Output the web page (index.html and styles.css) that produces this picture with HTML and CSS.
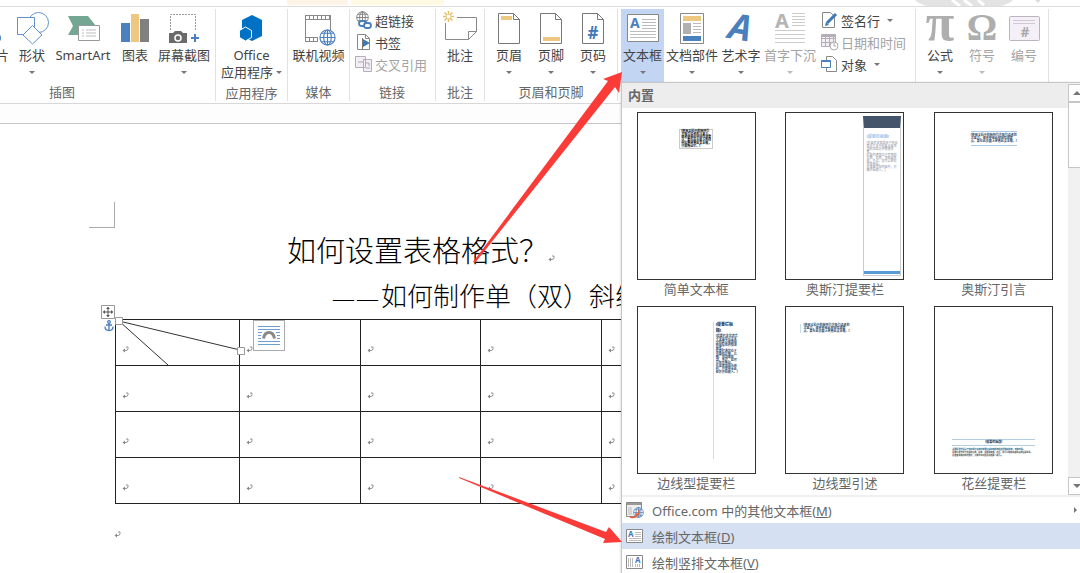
FILE: index.html
```html
<!DOCTYPE html>
<html lang="zh-CN">
<head>
    <meta charset="UTF-8">
    <meta name="viewport" content="width=device-width, initial-scale=1.0">
    <title>如何设置表格格式</title>
    <link rel="stylesheet" href="styles.css">
</head>
<body>
    <!-- shared symbols -->
    <svg class="symbols" aria-hidden="true">
        <symbol id="mark" viewBox="0 0 7 7">
            <path d="M4 1h2v1.500q0 2-2 2H1" fill="none" stroke="#888" stroke-width="0.900"/>
            <path d="M3 2.500v4L.5 4.500z" fill="#888"/>
        </symbol>
        <symbol id="globe" viewBox="0 0 18 18">
            <circle cx="9" cy="9" r="8" fill="#fff"/>
            <g fill="none" stroke="currentColor" stroke-width="1.200">
                <circle cx="9" cy="9" r="8"/>
                <ellipse cx="9" cy="9" rx="4" ry="8"/>
                <path d="M9 1v16M1 9h16M2.500 4.500h13M2.500 13.500h13"/>
            </g>
        </symbol>
        <symbol id="page" viewBox="0 0 36 34">
            <path d="M7.500 3.500h15l6 6v24h-21zM22.500 3.500v6h6" fill="#fff" stroke="#777"/>
        </symbol>
    </svg>

    <div class="app">
        <header class="tabs">
            <div class="tab-group tab-design"></div>
            <div class="tab-group tab-table"></div>
            <svg class="cloud" width="130" height="6" viewBox="0 0 130 6">
                <path d="M5 0h98q-4 4-12 6H17Q9 4 5 0z" fill="#e3e3e3"/>
                <path d="M42 0l8 6M54 0l8 6M68 0l6 5" stroke="#fff" stroke-width="3"/>
                <path d="M125 0h6l-3 3z" fill="#ddd"/>
            </svg>
        </header>

        <nav class="ribbon">
            <section class="group group-illustrations">
                <div class="tools">
                    <button class="tool w36">
                        <svg width="36" height="34" viewBox="0 0 36 34"><circle cx="17" cy="28" r="6" fill="#4a80bd"/></svg>
                        <span>图片</span>
                    </button>
                    <button class="tool w36">
                        <svg width="36" height="34" viewBox="0 0 36 34" fill="#fff" stroke="#5f93cf">
                            <circle cx="24.500" cy="12.500" r="10"/>
                            <path d="M3.500 7.500h17v17h-17z"/>
                            <path d="M18.500 15.500l9.500 9.500-9.500 9-9.500-9z"/>
                        </svg>
                        <span>形状</span>
                        <i class="caret"></i>
                    </button>
                    <button class="tool w66">
                        <svg width="36" height="34" viewBox="0 0 36 34">
                            <path d="M3 6h20l8 10-7 9H3l5-9z" fill="#73a793"/>
                            <path d="M13.500 15.500h21v15h-21z" fill="#fff" stroke="#999"/>
                            <path d="M17 20h2M21 20h10M17 23h2M21 23h10M17 26h2M21 26h10" stroke="#bbb"/>
                        </svg>
                        <span>SmartArt</span>
                    </button>
                    <button class="tool w38">
                        <svg width="36" height="34" viewBox="0 0 36 34">
                            <path d="M4 13h9v19H4z" fill="#4a80bd"/>
                            <path d="M14 4h8v28h-8z" fill="#eec880"/>
                            <path d="M23 9h9v23h-9z" fill="#808080"/>
                        </svg>
                        <span>图表</span>
                    </button>
                    <button class="tool w60">
                        <svg width="36" height="34" viewBox="0 0 36 34">
                            <path d="M4.500 20V4.500h25V20" fill="none" stroke="#999" stroke-dasharray="2 1"/>
                            <path d="M3 23h4l2-2h6l2 2h4v10H3z" fill="#6b6b6b"/>
                            <circle cx="12" cy="28" r="3" fill="#6b6b6b" stroke="#fff" stroke-width="1.500"/>
                            <path d="M29 24v8M25 28h8" stroke="#4a80bd" stroke-width="2"/>
                        </svg>
                        <span>屏幕截图</span>
                        <i class="caret"></i>
                    </button>
                </div>
                <h2>插图</h2>
            </section>

            <section class="group group-apps">
                <div class="tools">
                    <button class="tool">
                        <svg width="36" height="34" viewBox="0 0 36 34">
                            <path d="M19 5l10 5v16l-10 5-10-5V10z" fill="#0072c6"/>
                            <path d="M12.500 17l6 3.500v7l-6 3.500-6-3.500v-7z" fill="#0072c6" stroke="#fff"/>
                        </svg>
                        <span>Office</span>
                        <span class="with-caret">应用程序<i class="caret"></i></span>
                    </button>
                </div>
                <h2>应用程序</h2>
            </section>

            <section class="group group-media">
                <div class="tools">
                    <button class="tool">
                        <svg class="blue" width="36" height="34" viewBox="0 0 36 34">
                            <path d="M5.500 5v26M30.500 5v16M5 5.500h26M5 9.500h26M5 27.500h13M5 31.500h13" fill="none" stroke="#888"/>
                            <path d="M5 7.500h26M5 29.500h13" stroke="#888" stroke-width="4" stroke-dasharray="1 3"/>
                            <use href="#globe" x="19" y="19" width="17" height="17"/>
                        </svg>
                        <span>联机视频</span>
                    </button>
                </div>
                <h2>媒体</h2>
            </section>

            <section class="group group-links">
                <div class="rows">
                    <button class="row">
                        <svg width="18" height="18" viewBox="0 0 18 18">
                            <g color="#777"><use href="#globe" x="1" y="0" width="13" height="13"/></g>
                            <g fill="#fff" stroke="#4a80bd" stroke-width="1.800"><rect x="4" y="10" width="7" height="5" rx="2.500"/><rect x="9" y="12" width="7" height="5" rx="2.500"/></g>
                        </svg>
                        <span>超链接</span>
                    </button>
                    <button class="row">
                        <svg width="18" height="18" viewBox="0 0 18 18">
                            <path d="M2.500 1.500h8l4 4v11h-12zM10.500 1.500v4h4" fill="#fff" stroke="#888"/>
                            <path d="M7.500 5v11" stroke="#777"/>
                            <path d="M8 6l7 4-7 4z" fill="#3f78b8"/>
                        </svg>
                        <span>书签</span>
                    </button>
                    <button class="row" disabled>
                        <svg width="18" height="18" viewBox="0 0 18 18">
                            <path d="M.5 1.500h10v11H.5zM8.500 4.500h8v12h-8z" fill="#f4eef6" stroke="#b5aeb8"/>
                            <path d="M3 7h5M11 8h3v3M11 13h4" fill="none" stroke="#aaa"/>
                        </svg>
                        <span>交叉引用</span>
                    </button>
                </div>
                <h2>链接</h2>
            </section>

            <section class="group group-comments">
                <div class="tools">
                    <button class="tool">
                        <svg width="36" height="34" viewBox="0 0 36 34">
                            <path d="M15 7.500h19.500v14l-8 8h-23V13M26.500 29.500v-8h8" fill="none" stroke="#888"/>
                            <path d="M6.500 1v11M1 6.500h11M2.500 2.500l8 8M10.500 2.500l-8 8" stroke="#e9bd67" stroke-width="1.500"/>
                            <circle cx="6.500" cy="6.500" r="2" fill="#fff"/>
                        </svg>
                        <span>批注</span>
                    </button>
                </div>
                <h2>批注</h2>
            </section>

            <section class="group group-header">
                <div class="tools">
                    <button class="tool w42">
                        <svg width="36" height="34" viewBox="0 0 36 34"><use href="#page"/><path d="M10 6h11v4H10z" fill="#eec880"/></svg>
                        <span>页眉</span>
                        <i class="caret"></i>
                    </button>
                    <button class="tool w42">
                        <svg width="36" height="34" viewBox="0 0 36 34"><use href="#page"/><path d="M10 27h17v4H10z" fill="#eec880"/></svg>
                        <span>页脚</span>
                        <i class="caret"></i>
                    </button>
                    <button class="tool w42">
                        <svg width="36" height="34" viewBox="0 0 36 34"><use href="#page"/><text class="hash" x="18" y="29">#</text></svg>
                        <span>页码</span>
                        <i class="caret"></i>
                    </button>
                </div>
                <h2>页眉和页脚</h2>
            </section>

            <section class="group group-text">
                <div class="tools">
                    <button class="tool w43 active" aria-expanded="true">
                        <svg width="36" height="34" viewBox="0 0 36 34">
                            <path d="M2.500 4.500h31v27h-31z" fill="#fff" stroke="#888"/>
                            <text class="letter-a" x="5" y="18">A</text>
                            <path d="M17 9.500h14M17 12.500h14M17 15.500h14M17 18.500h14M5 21.500h26M5 24.500h26M5 27.500h26" stroke="#bbb"/>
                        </svg>
                        <span>文本框</span>
                        <i class="caret"></i>
                    </button>
                    <button class="tool w56">
                        <svg width="36" height="34" viewBox="0 0 36 34">
                            <path d="M6.500 3.500h23v30h-23z" fill="#fff" stroke="#888"/>
                            <path d="M9 6h18v5H9z" fill="#eec880"/>
                            <path d="M9 13h8v11H9z" fill="#b0b0b0"/>
                            <path d="M19 13.500h8M19 16.500h8M19 19.500h8M19 22.500h8" stroke="#bbb"/>
                            <path d="M9 26h18v5H9z" fill="#4a80bd"/>
                        </svg>
                        <span>文档部件</span>
                        <i class="caret"></i>
                    </button>
                    <button class="tool w42">
                        <svg width="36" height="34" viewBox="0 0 36 34"><text class="wordart" x="6" y="30" transform="rotate(10 18 18)">A</text></svg>
                        <span>艺术字</span>
                        <i class="caret"></i>
                    </button>
                    <button class="tool w56" disabled>
                        <svg width="36" height="34" viewBox="0 0 36 34">
                            <text class="dropcap" x="3" y="18">A</text>
                            <path d="M20 3.500h13M20 6.500h13M20 9.500h13M20 12.500h13M20 15.500h13M3 20.500h30M3 24.500h30M3 28.500h30M3 32.500h30" stroke="#ccc"/>
                        </svg>
                        <span>首字下沉</span>
                        <i class="caret"></i>
                    </button>
                    <div class="rows">
                        <button class="row">
                            <svg width="18" height="18" viewBox="0 0 18 18">
                                <path d="M1.500 1.500h8l4 4v11h-12z" fill="#fff" stroke="#888"/>
                                <path d="M15 3L6 12" stroke="#3f78b8" stroke-width="3"/>
                                <path d="M4 15l1-4 3 3z" fill="#3f78b8"/>
                            </svg>
                            <span>签名行</span>
                            <i class="caret"></i>
                        </button>
                        <button class="row" disabled>
                            <svg width="18" height="18" viewBox="0 0 18 18">
                                <path d="M.5 1.500h14v12H.5zM.5 5.500h14M.5 9.500h14M4.500 2v11M8.500 2v11M12.500 2v11" fill="#f4eef6" stroke="#b5aeb8"/>
                                <path d="M1 2h13v2H1z" fill="#b5aeb8"/>
                                <circle cx="13" cy="13" r="4" fill="#fff" stroke="#aaa"/>
                                <path d="M13 10v3h2" fill="none" stroke="#aaa"/>
                            </svg>
                            <span>日期和时间</span>
                        </button>
                        <button class="row">
                            <svg width="18" height="18" viewBox="0 0 18 18">
                                <path d="M5.500 1.500h6l4 4v11h-10z" fill="#fff" stroke="#888"/>
                                <path d="M.5 5.500h9v7h-9z" fill="#fff" stroke="#4a80bd"/>
                                <path d="M.5 6h9" stroke="#4a80bd" stroke-width="2"/>
                            </svg>
                            <span>对象</span>
                            <i class="caret"></i>
                        </button>
                    </div>
                </div>
            </section>

            <section class="group group-symbols">
                <div class="tools">
                    <button class="tool w42">
                        <svg width="36" height="34" viewBox="0 0 36 34"><text class="symbol pi" x="18" y="30">π</text></svg>
                        <span>公式</span>
                        <i class="caret"></i>
                    </button>
                    <button class="tool w42" disabled>
                        <svg width="36" height="34" viewBox="0 0 36 34"><text class="symbol" x="18" y="30">Ω</text></svg>
                        <span>符号</span>
                        <i class="caret"></i>
                    </button>
                    <button class="tool w42" disabled>
                        <svg width="36" height="34" viewBox="0 0 36 34">
                            <rect x="3.500" y="6.500" width="30" height="24" rx="1" fill="#f5f0f7" stroke="#bbb3bd"/>
                            <path d="M7 10.500h22M7 13.500h22" stroke="#d0c8d2"/>
                            <text class="hash muted" x="19" y="27">#</text>
                        </svg>
                        <span>编号</span>
                    </button>
                </div>
            </section>
        </nav>

        <div class="ruler"></div>

        <main class="document">
            <div class="corner"></div>
            <h1>如何设置表格格式？<svg class="mark"><use href="#mark"/></svg></h1>
            <p class="subtitle"><b>—</b><b>—</b>如何制作单（双）斜线表头</p>
            <table>
                <colgroup>
                    <col class="first"><col><col><col><col><col>
                </colgroup>
                <tr>
                    <td><svg class="mark"><use href="#mark"/></svg></td>
                    <td><svg class="mark"><use href="#mark"/></svg></td>
                    <td><svg class="mark"><use href="#mark"/></svg></td>
                    <td><svg class="mark"><use href="#mark"/></svg></td>
                    <td><svg class="mark"><use href="#mark"/></svg></td>
                    <td><svg class="mark"><use href="#mark"/></svg></td>
                </tr>
                <tr>
                    <td><svg class="mark"><use href="#mark"/></svg></td>
                    <td><svg class="mark"><use href="#mark"/></svg></td>
                    <td><svg class="mark"><use href="#mark"/></svg></td>
                    <td><svg class="mark"><use href="#mark"/></svg></td>
                    <td><svg class="mark"><use href="#mark"/></svg></td>
                    <td><svg class="mark"><use href="#mark"/></svg></td>
                </tr>
                <tr>
                    <td><svg class="mark"><use href="#mark"/></svg></td>
                    <td><svg class="mark"><use href="#mark"/></svg></td>
                    <td><svg class="mark"><use href="#mark"/></svg></td>
                    <td><svg class="mark"><use href="#mark"/></svg></td>
                    <td><svg class="mark"><use href="#mark"/></svg></td>
                    <td><svg class="mark"><use href="#mark"/></svg></td>
                </tr>
                <tr>
                    <td><svg class="mark"><use href="#mark"/></svg></td>
                    <td><svg class="mark"><use href="#mark"/></svg></td>
                    <td><svg class="mark"><use href="#mark"/></svg></td>
                    <td><svg class="mark"><use href="#mark"/></svg></td>
                    <td><svg class="mark"><use href="#mark"/></svg></td>
                    <td><svg class="mark"><use href="#mark"/></svg></td>
                </tr>
            </table>
            <p class="empty"><svg class="mark"><use href="#mark"/></svg></p>
        </main>

        <!-- diagonal lines in the first cell, with their handles -->
        <svg class="shapes" width="150" height="64" viewBox="0 0 150 64">
            <path d="M19 17L140 46M19 17L68 61" stroke="#333" fill="none"/>
            <g fill="#fff" stroke="#999">
                <path d="M1.500 1.500h13v13h-13z"/>
                <path d="M15.500 13.500h7v7h-7zM137.500 43.500h7v7h-7z"/>
            </g>
            <path d="M8 3v10M3 8h10" stroke="#555"/>
            <path d="M6 5l2-2 2 2zM6 11l2 2 2-2zM5 6L3 8l2 2zM11 6l2 2-2 2z" fill="#555"/>
            <g fill="none" stroke="#4a80bd" stroke-width="1.300">
                <circle cx="9" cy="18" r="1.300"/>
                <path d="M9 19v7M6 21h6M5 22.500q0 4 4 4t4-4"/>
            </g>
        </svg>
        <button class="layout-options" aria-label="布局选项">
            <svg width="24" height="22" viewBox="0 0 24 22">
                <path d="M1 1.500h22M1 4.500h22M1 7.500h4M19 7.500h4M1 10.500h3M20 10.500h3M1 13.500h3M20 13.500h3M1 16.500h22M1 19.500h22" stroke="#6d9fd4"/>
                <path d="M6.500 13.500q1-6 5.500-6t5.500 6" fill="none" stroke="#888" stroke-width="3"/>
            </svg>
        </button>

        <div class="menu">
            <div class="menu-scroll">
                <div class="menu-main">
                    <h3>内置</h3>
                    <div class="gallery">
                        <button class="card">
                            <span class="preview">
                                <span class="tiny box">[使用文档中的独特引言吸引读者的注意力，或者使用此空间强调要点。要在此页面上的任何位置放置此文本框，只需拖动它。]</span>
                            </span>
                            <span class="caption">简单文本框</span>
                        </button>
                        <button class="card">
                            <span class="preview">
                                <span class="tiny austin">
                                    <b>[提要栏标题]</b>
                                    <span>[提要栏非常适合于突出显示文本中的要点或添加附加信息供快速参考。<br>提要栏通常位于页面的左侧、右侧、顶部或底部。不过，您可以轻松将其拖动。<br>在准备添加内容时，只需开始键入。]</span>
                                </span>
                            </span>
                            <span class="caption">奥斯汀提要栏</span>
                        </button>
                        <button class="card">
                            <span class="preview">
                                <span class="tiny quote">[使用文档中的独特引言吸引读者的注意力，或者使用此空间强调要点。要在此页面上放置此文本框。]</span>
                            </span>
                            <span class="caption">奥斯汀引言</span>
                        </button>
                        <button class="card">
                            <span class="preview">
                                <span class="tiny side">
                                    <b>[提要栏标题]</b>
                                    <span>[提要栏非常适合于突出显示文本中的要点或添加附加信息供快速参考。<br>提要栏通常位于页面的左侧、右侧、顶部或底部。不过，您可以将其拖动。<br>在准备添加内容时，只需单击此处并开始键入。]</span>
                                </span>
                            </span>
                            <span class="caption">边线型提要栏</span>
                        </button>
                        <button class="card">
                            <span class="preview">
                                <span class="tiny side-quote">[使用文档中的独特引言吸引读者的注意力，或者使用此空间强调要点。要在此页面上放置此文本框。]</span>
                            </span>
                            <span class="caption">边线型引述</span>
                        </button>
                        <button class="card">
                            <span class="preview">
                                <span class="tiny filigree">
                                    <b>[提要栏标题]</b>
                                    <span>[提要栏非常适合于突出显示文本中的要点或添加附加信息供快速参考，例如日程。<br>提要栏通常位于页面的左侧、右侧、顶部或底部。不过，您可以轻松将其拖动到任意位置。<br>在准备添加您的内容时，只需单击此处并开始键入即可。]</span>
                                </span>
                            </span>
                            <span class="caption">花丝提要栏</span>
                        </button>
                    </div>
                </div>
                <div class="scrollbar">
                    <button class="up" aria-label="向上"></button>
                    <div class="thumb"></div>
                    <button class="down" aria-label="向下"></button>
                </div>
            </div>
            <button class="menu-item">
                <svg width="18" height="18" viewBox="0 0 18 18">
                    <path d="M.5 1.500h15v14H.5z" fill="#eee" stroke="#888"/>
                    <path d="M1 3h14" stroke="#999" stroke-width="2"/>
                    <path d="M3 6v8M5 6v8" stroke="#bbb"/>
                    <g color="#4a80bd"><use href="#globe" x="7" y="6" width="11" height="11"/></g>
                    <path d="M4 16q6 2 9-4M13 9v4h-4" fill="none" stroke="#e8623a" stroke-width="1.600"/>
                </svg>
                <span>Office.com 中的其他文本框(<u>M</u>)</span>
                <i class="chevron"></i>
            </button>
            <button class="menu-item selected">
                <svg width="18" height="18" viewBox="0 0 18 18">
                    <path d="M.5 2.500h16v13H.5z" fill="#fff" stroke="#888"/>
                    <text class="mini-a" x="2" y="10">A</text>
                    <path d="M9 5.500h6M9 7.500h6M9 9.500h6M3 11.500h12M3 13.500h12" stroke="#bbb"/>
                </svg>
                <span>绘制文本框(<u>D</u>)</span>
            </button>
            <button class="menu-item">
                <svg width="18" height="18" viewBox="0 0 18 18">
                    <path d="M.5 2.500h16v13H.5z" fill="#fff" stroke="#888"/>
                    <text class="mini-a" x="9" y="10">A</text>
                    <path d="M2.500 5v9M4.500 5v9M6.500 5v9M9.500 11v3M11.500 11v3M13.500 11v3" stroke="#bbb"/>
                </svg>
                <span>绘制竖排文本框(<u>V</u>)</span>
            </button>
        </div>

        <!-- pointer arrows -->
        <svg class="pointers" width="180" height="490" viewBox="0 0 180 490">
            <g fill="#fb3b38">
                <path d="M23 202L158 21 153 19 172 12 169 33 165 27 25 203z"/>
                <path d="M9 417L156 472 159 467 172 482 153 483 155 479 9 418z"/>
            </g>
        </svg>
    </div>
</body>
</html>
```

FILE: styles.css
```css
* {
    box-sizing: border-box;
}
body {
    margin: 0;
    font-family: "Noto Sans", "Noto Sans CJK SC", sans-serif;
    font-size: 13px;
    color: #444;
    background: #fff;
}
button {
    margin: 0;
    padding: 0;
    border: none;
    background: none;
    font: inherit;
    color: inherit;
}
.symbols {
    display: none;
}
.app {
    position: relative;
    min-height: 100vh;
    overflow: hidden;
}

/* title strip */
.tabs {
    display: flex;
    height: 7px;
    border-bottom: 1px solid #dcdcdc;
}
.tab-group {
    height: 5px;
}
.tab-design {
    width: 61px;
    margin-left: 287px;
    background: #fdf3e6;
}
.tab-table {
    width: 93px;
    margin-left: 3px;
    background: #fff9e3;
}
.cloud {
    margin-left: auto;
    margin-right: 40px;
}

/* ribbon */
.ribbon {
    display: flex;
    height: 97px;
    padding: 2px 0;
    border-bottom: 1px solid #d8d8d8;
}
.group {
    display: flex;
    flex-direction: column;
    flex-shrink: 0;
    border-right: 1px solid #e2e2e2;
}
.group h2 {
    margin: 3px 0 0;
    font-size: 13px;
    font-weight: normal;
    line-height: 18px;
    text-align: center;
    color: #666;
}
.tools {
    display: flex;
    height: 73px;
    justify-content: center;
}
.tool {
    display: flex;
    flex-direction: column;
    align-items: center;
    flex-shrink: 0;
    padding-top: 1px;
    line-height: 17px;
    white-space: nowrap;
}
.tool svg {
    margin-bottom: 3px;
    overflow: visible;
    flex-shrink: 0;
}
.tool > .caret {
    margin-top: 7px;
}
.tool.active {
    background: #c2d5f2;
}
.tool:disabled,
.row:disabled {
    color: #a3a3a3;
}
.caret {
    display: block;
    border: 3px solid transparent;
    border-top-color: #777;
    border-bottom: none;
}
:disabled .caret {
    border-top-color: #bbb;
}
.with-caret {
    display: flex;
    align-items: center;
    gap: 3px;
}
.w36 { width: 36px; }
.w38 { width: 38px; }
.w42 { width: 42px; }
.w43 { width: 43px; }
.w56 { width: 56px; }
.w60 { width: 60px; }
.w66 { width: 66px; }
.rows {
    display: flex;
    flex-direction: column;
    height: 73px;
}
.row {
    display: flex;
    align-items: center;
    gap: 2px;
    height: 22px;
    white-space: nowrap;
}
.row .caret {
    margin-left: 5px;
}
.group-illustrations {
    width: 216px;
    padding-right: 1px;
    overflow: hidden;
}
.group-illustrations .tools {
    justify-content: flex-end;
}
.group-illustrations h2 {
    width: 124px;
}
.group-apps {
    width: 72px;
}
.group-media {
    width: 62px;
}
.group-links {
    width: 86px;
    padding-left: 5px;
}
.group-links h2 {
    padding-right: 6px;
}
.group-comments {
    width: 49px;
}
.group-header {
    width: 133px;
}
.group-text {
    width: 298px;
}
.group-text .tools {
    justify-content: flex-start;
    padding-left: 3px;
}
.group-text .rows {
    padding-left: 3px;
}
.group-symbols {
    width: 133px;
}
.blue {
    color: #4a80bd;
}
.hash {
    font: bold 17px "Noto Sans", sans-serif;
    text-anchor: middle;
    fill: #3f78b8;
}
.hash.muted {
    font-size: 14px;
    fill: #aaa;
}
.letter-a {
    font: bold 14px "Noto Sans", sans-serif;
    fill: #4a80bd;
}
.wordart {
    font: italic bold 36px "Open Sans", sans-serif;
    fill: #4a80bd;
}
.dropcap {
    font: bold 20px "Noto Sans", sans-serif;
    fill: #b5b5b5;
}
.symbol {
    font: bold 38px "Liberation Serif", serif;
    text-anchor: middle;
    fill: #aeaeae;
}
.symbol.pi {
    font-size: 52px;
}
.ruler {
    height: 20px;
    background: #fdfdfd;
    border-bottom: 1px solid #c6c6c6;
}

/* document */
.document {
    color: #000;
    font-family: "Liberation Serif", "Noto Sans CJK SC", serif;
    white-space: nowrap;
}
.corner {
    width: 26px;
    height: 26px;
    margin: 78px 0 4px 89px;
    border: solid #aaa;
    border-width: 0 1px 1px 0;
}
.document h1 {
    margin: 0 0 4px;
    padding-left: 287px;
    font-size: 29px;
    font-weight: 300;
    line-height: 40px;
}
.subtitle {
    margin: 0;
    padding-left: 333px;
    font-size: 26px;
    font-weight: 300;
    line-height: 43px;
}
.subtitle b {
    margin-right: 3px;
    font-size: 21px;
    line-height: 20px;
}
.mark {
    width: 7px;
    height: 7px;
}
table {
    width: 728px;
    margin-left: 115px;
    border-collapse: collapse;
    table-layout: fixed;
}
.first {
    width: 124px;
}
td {
    height: 46px;
    padding: 12px 6px 0;
    border: 1px solid #222;
    line-height: 12px;
}
.empty {
    margin: 24px 0 0 114px;
    line-height: 12px;
}
.shapes {
    position: absolute;
    top: 304px;
    left: 100px;
}
.layout-options {
    position: absolute;
    top: 320px;
    left: 253px;
    padding: 4px 3px 3px;
    border: 1px solid #aaa;
    background: #fff;
}
.layout-options svg {
    display: block;
}
.pointers {
    position: absolute;
    top: 60px;
    left: 450px;
    pointer-events: none;
}

/* text box menu */
.menu {
    position: absolute;
    top: 82px;
    left: 621px;
    right: 0;
    border: solid #c6c6c6;
    border-width: 1px 0 0 1px;
    background: #fff;
    color: #666;
    box-shadow: -1px 0 2px rgba(0, 0, 0, 0.1);
}
.menu-scroll {
    display: flex;
    border-bottom: 2px solid #f0f0f0;
}
.menu-main {
    flex: 1;
}
.menu h3 {
    margin: 0 0 4px;
    padding-left: 6px;
    font-size: 13px;
    line-height: 25px;
    background: #ededed;
}
.gallery {
    display: grid;
    grid-template-columns: repeat(3, 1fr);
    row-gap: 7px;
    justify-items: center;
    padding-bottom: 2px;
}
.card {
    display: flex;
    flex-direction: column;
    align-items: center;
}
.preview {
    display: flex;
    justify-content: center;
    align-items: flex-start;
    width: 119px;
    height: 168px;
    border: 1px solid #333;
    background: #fff;
}
.caption {
    line-height: 19px;
}
.tiny {
    font-size: 3px;
    line-height: 3px;
    font-weight: bold;
    text-align: left;
    color: #1f3f63;
}
.tiny b,
.tiny span {
    display: block;
}
.box {
    width: 34px;
    margin-top: 16px;
    padding: 0 1px;
    border: 1px solid #ccc;
    color: #000;
}
.austin {
    width: 38px;
    height: 160px;
    margin: 3px 2px 0 auto;
    padding: 7px 2px;
    border: 1px solid #ccc;
    border-top: 12px solid #44546a;
    box-shadow: inset 0 -1px #fff, inset 0 -4px #5b9bd5;
    color: #8a8a9a;
    font-weight: normal;
}
.austin b {
    margin-bottom: 4px;
    font-size: 4px;
    color: #9cc3e8;
}
.quote {
    width: 46px;
    margin-top: 18px;
    padding: 2px 0;
    border: solid #a9cbe8;
    border-width: 1px 0;
}
.side {
    width: 25px;
    height: 137px;
    margin: 15px 17px 0 auto;
    padding-left: 2px;
    border-left: 1px solid #c5dff3;
}
.side b {
    margin-bottom: 1px;
    font-size: 4px;
    line-height: 6px;
}
.side-quote {
    width: 50px;
    margin: 17px auto 0 14px;
    padding-left: 2px;
    border-left: 1px solid #c5dff3;
}
.filigree {
    width: 83px;
    margin-top: 132px;
    font-size: 2px;
}
.filigree b {
    margin-bottom: 2px;
    border: solid #b5cfe0;
    border-width: 1px 0;
    font-size: 3px;
    line-height: 5px;
    text-align: center;
}
.scrollbar {
    display: flex;
    flex-direction: column;
    width: 17px;
    margin-right: -5px;
    padding-top: 1px;
    background: #f1f1f1;
}
.up,
.down {
    display: flex;
    justify-content: center;
    align-items: center;
    height: 18px;
    border: 1px solid #c6c6c6;
    background: #fff;
}
.up::before,
.down::before {
    content: "";
    border: 4px solid transparent;
    border-top: none;
    border-bottom: 4px solid #777;
}
.down {
    margin-top: auto;
}
.down::before {
    border-top: 4px solid #777;
    border-bottom: none;
}
.thumb {
    height: 66px;
    border: 1px solid #c6c6c6;
    background: #fff;
}
.menu-item {
    display: flex;
    align-items: center;
    gap: 8px;
    width: 100%;
    height: 26px;
    padding: 0 3px 0 4px;
}
.menu-item.selected {
    background: #d5e0f2;
}
.chevron {
    margin-left: auto;
    border: 3px solid transparent;
    border-left-color: #777;
    border-right: none;
}
.mini-a {
    font: bold 8px "Noto Sans", sans-serif;
    fill: #3f78b8;
}
```
